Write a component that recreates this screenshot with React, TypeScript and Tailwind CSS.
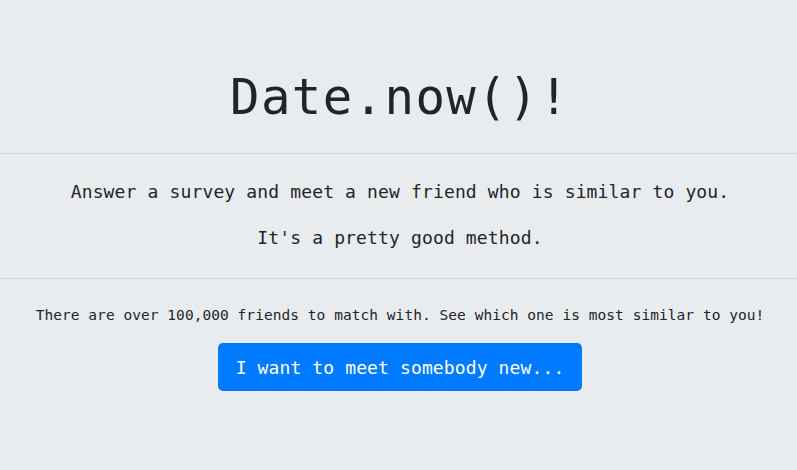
export default function App() {
    return (
        <div className="min-h-screen w-full bg-[#e9ecef] text-[#212529] font-['DejaVu_Sans_Mono','Liberation_Mono',monospace]">
            <div className="flex flex-col items-center text-center">
                {/* Heading */}
                <h1 className="mt-16 h-[67px] pl-[3px] text-[49px] leading-[67px] tracking-[1.4px]">Date.now()!</h1>

                <div className="mt-[22px] h-px w-full bg-[#d2d5d8]" />

                {/* Lead */}
                <p className="mt-[23px] h-[30px] pl-[3px] text-[18px] leading-[30px] tracking-[0.14px]">
                    Answer a survey and meet a new friend who is similar to you.
                </p>
                <p className="mt-4 h-[30px] pl-[3px] text-[18px] leading-[30px] tracking-[0.14px]">
                    It's a pretty good method.
                </p>

                <div className="mt-[25px] h-px w-full bg-[#d2d5d8]" />

                <p className="mt-6 h-6 pl-[3px] text-[14.5px] leading-6 tracking-[0.05px]">
                    There are over 100,000 friends to match with. See which one is most similar to you!
                </p>

                <button className="mt-4 ml-[3px] flex h-12 items-center rounded-[5px] bg-[#007bff] px-[18px] text-[18px] tracking-[0.12px] text-white">
                    I want to meet somebody new...
                </button>
            </div>
        </div>
    )
}
